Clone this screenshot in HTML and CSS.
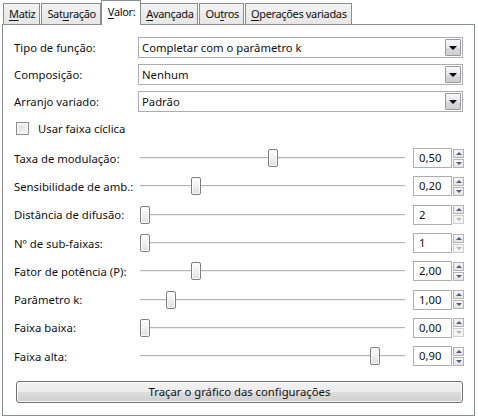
FILE: index.html
```html
<!DOCTYPE html>
<html lang="pt">
<head>
<meta charset="utf-8">
<link rel="stylesheet" href="styles.css">
</head>
<body>
<div class="tabs">
  <div class="tab"><u>M</u>atiz</div>
  <div class="tab">Sat<u>u</u>ração</div>
  <div class="tab active"><u>V</u>alor:</div>
  <div class="tab"><u>A</u>vançada</div>
  <div class="tab">Ou<u>t</u>ros</div>
  <div class="tab"><u>O</u>perações variadas</div>
</div>
<div class="panel">
  <div class="row">
    <span class="label">Tipo de função:</span>
    <div class="combo"><span class="combo-text">Completar com o parâmetro k</span><span class="drop"><span class="tri"></span></span></div>
  </div>
  <div class="row">
    <span class="label">Composição:</span>
    <div class="combo"><span class="combo-text">Nenhum</span><span class="drop"><span class="tri"></span></span></div>
  </div>
  <div class="row">
    <span class="label">Arranjo variado:</span>
    <div class="combo"><span class="combo-text">Padrão</span><span class="drop"><span class="tri"></span></span></div>
  </div>
  <div class="check-row">
    <span class="checkbox"></span>
    <span>Usar faixa cíclica</span>
  </div>
  <div class="sliders">
    <div class="srow">
      <span class="label">Taxa de modulação:</span>
      <div class="track"><span class="thumb" style="--v:0.5"></span></div>
      <div class="spin"><span class="spin-val">0,50</span><span class="arrows"><span class="arr up"></span><span class="arr down"></span></span></div>
    </div>
    <div class="srow">
      <span class="label">Sensibilidade de amb.:</span>
      <div class="track"><span class="thumb" style="--v:0.2"></span></div>
      <div class="spin"><span class="spin-val">0,20</span><span class="arrows"><span class="arr up"></span><span class="arr down"></span></span></div>
    </div>
    <div class="srow">
      <span class="label">Distância de difusão:</span>
      <div class="track"><span class="thumb" style="--v:0"></span></div>
      <div class="spin"><span class="spin-val">2</span><span class="arrows"><span class="arr up"></span><span class="arr down off"></span></span></div>
    </div>
    <div class="srow">
      <span class="label">Nº de sub-faixas:</span>
      <div class="track"><span class="thumb" style="--v:0"></span></div>
      <div class="spin"><span class="spin-val">1</span><span class="arrows"><span class="arr up"></span><span class="arr down off"></span></span></div>
    </div>
    <div class="srow">
      <span class="label">Fator de potência (P):</span>
      <div class="track"><span class="thumb" style="--v:0.2"></span></div>
      <div class="spin"><span class="spin-val">2,00</span><span class="arrows"><span class="arr up"></span><span class="arr down"></span></span></div>
    </div>
    <div class="srow">
      <span class="label">Parâmetro k:</span>
      <div class="track"><span class="thumb" style="--v:0.1"></span></div>
      <div class="spin"><span class="spin-val">1,00</span><span class="arrows"><span class="arr up"></span><span class="arr down"></span></span></div>
    </div>
    <div class="srow">
      <span class="label">Faixa baixa:</span>
      <div class="track"><span class="thumb" style="--v:0"></span></div>
      <div class="spin"><span class="spin-val">0,00</span><span class="arrows"><span class="arr up"></span><span class="arr down off"></span></span></div>
    </div>
    <div class="srow">
      <span class="label">Faixa alta:</span>
      <div class="track"><span class="thumb" style="--v:0.9"></span></div>
      <div class="spin"><span class="spin-val">0,90</span><span class="arrows"><span class="arr up"></span><span class="arr down"></span></span></div>
    </div>
  </div>
  <div class="btn">Traçar o gráfico das configurações</div>
</div>
</body>
</html>
```
FILE: styles.css
```css
* { box-sizing: border-box; }
html, body { margin: 0; padding: 0; background: #ffffff; }
body {
  width: 478px;
  height: 418px;
  font-family: "Noto Sans", "Open Sans", sans-serif;
  font-size: 11.3px;
  color: #111;
  overflow: hidden;
}
u { text-decoration: underline; text-underline-offset: 2px; }

.tabs {
  display: flex;
  align-items: flex-end;
  height: 24px;
  padding-left: 3px;
  position: relative;
  z-index: 1;
  font-size: 11px;
  letter-spacing: -0.35px;
}
.tab {
  height: 21px;
  border: 1px solid #898c95;
  border-bottom: none;
  background: linear-gradient(#f2f2f2, #e6e6e6);
  padding: 0 4px 0 5px;
  line-height: 19px;
  white-space: nowrap;
  margin-right: 1px;
}
.tab.active {
  height: 25px;
  margin-bottom: -1px;
  background: #fff;
  line-height: 22px;
  padding: 0 5px 0 6px;
  margin-left: -1px;
  margin-right: -1px;
}

.panel {
  margin: 0 3px 0 2px;
  height: 392px;
  border: 1px solid #898c95;
  background: #fff;
  padding: 9px 11px 0 11px;
}

.row {
  display: grid;
  grid-template-columns: 124px 1fr;
  align-items: center;
  height: 27px;
}
.label { white-space: nowrap; }
.combo {
  height: 21px;
  border: 1px solid #abadb3;
  border-top-color: #acacac;
  display: flex;
  align-items: center;
  justify-content: space-between;
  padding: 0 1px 0 3px;
  background: #fff;
}
.combo-text { white-space: nowrap; }
.drop {
  width: 16px;
  height: 17px;
  border: 1px solid #9a9a9a;
  border-radius: 1px;
  background: linear-gradient(#f8f8f8, #e9e9e9 50%, #d9d9d9 51%, #cfcfcf);
  display: flex;
  align-items: center;
  justify-content: center;
}
.tri {
  width: 0;
  height: 0;
  border-left: 4px solid transparent;
  border-right: 4px solid transparent;
  border-top: 4px solid #000;
}

.check-row {
  display: flex;
  align-items: center;
  height: 27px;
  padding-left: 2px;
  gap: 9px;
}
.checkbox {
  width: 13px;
  height: 13px;
  border: 1px solid #8e8f8f;
  background: linear-gradient(135deg, #dcdcdc, #f8f8f8);
  box-shadow: inset 0 0 0 2px #f4f4f4;
}

.sliders {
  margin-top: 2px;
}
.srow {
  display: grid;
  grid-template-columns: 126px 265px 1fr;
  align-items: center;
  height: 28.3px;
}
.track {
  position: relative;
  height: 2px;
  border-top: 1px solid #b4b4b4;
  border-bottom: 1px solid #f0f0f0;
  width: 265px;
}
.thumb {
  position: absolute;
  top: -9px;
  left: calc(var(--v) * (100% - 10px));
  width: 10px;
  height: 18px;
  border: 1px solid #7e7e7e;
  border-radius: 2px;
  background: linear-gradient(#ffffff, #f0f0f0 50%, #dedede);
  box-shadow: inset 0 0 0 1px #fcfcfc;
}
.spin {
  display: flex;
  align-items: center;
  margin-left: 8px;
  height: 20px;
}
.spin-val {
  width: 39px;
  height: 20px;
  border: 1px solid #abadb3;
  padding-left: 5px;
  line-height: 18px;
}
.arrows {
  display: flex;
  flex-direction: column;
  margin-left: 1px;
  gap: 1px;
}
.arr {
  width: 11px;
  height: 9px;
  border: 1px solid #b3b3b3;
  background: linear-gradient(#f6f6f6, #e4e4e4);
  display: flex;
  align-items: center;
  justify-content: center;
}
.arr::after {
  content: "";
  width: 0;
  height: 0;
  border-left: 3px solid transparent;
  border-right: 3px solid transparent;
}
.arr.up::after { border-bottom: 3px solid #4a5f8d; }
.arr.down::after { border-top: 3px solid #4a5f8d; }
.arr.off::after { border-top-color: #b8b8b8; }
.arr.off { background: #f4f4f4; border-color: #cfcfcf; }

.btn {
  margin: 11px 0 0 2px;
  width: 447px;
  height: 22px;
  border: 1px solid #707070;
  border-radius: 3px;
  background: linear-gradient(#f2f2f2, #ebebeb 50%, #dddddd 51%, #cfcfcf);
  box-shadow: inset 0 0 0 1px #fbfbfb;
  text-align: center;
  line-height: 20px;
}
```
